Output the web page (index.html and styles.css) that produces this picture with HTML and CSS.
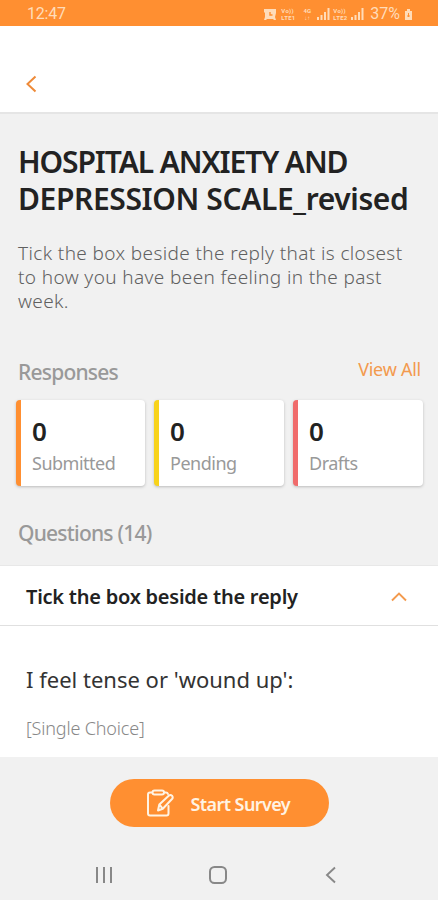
FILE: index.html
```html
<!DOCTYPE html>
<html lang="en">
<head>
<meta charset="utf-8">
<meta name="viewport" content="width=device-width">
<title>Survey details</title>
<link rel="stylesheet" href="styles.css">
</head>
<body>
<div class="screen">
  <div class="status">
    <span class="time">12:47</span>
    <div class="status-icons">
      <svg class="alarm" width="14" height="13" viewBox="0 0 14 13"><path d="M1 1h12v4l-1 4 1 3h-2l-1-1H4l-1 1H1l1-3V5L1 4z" fill="currentColor"/><path d="M7 4v3h2.500" fill="none" stroke="#ff8f31" stroke-width="1.400"/></svg>
      <span class="lte"><span>Vo))</span><span>LTE1</span></span>
      <span class="net"><span>4G</span><span>↓↑</span></span>
      <svg class="signal" width="13" height="12" viewBox="0 0 13 12"><path d="M1 12V9M4.500 12V7M8 12V4M11.500 12V0" stroke="currentColor" stroke-width="2"/></svg>
      <span class="lte"><span>Vo))</span><span>LTE2</span></span>
      <svg class="signal" width="13" height="12" viewBox="0 0 13 12"><path d="M1 12V9M4.500 12V7M8 12V4M11.500 12V0" stroke="currentColor" stroke-width="2"/></svg>
      <span class="percent">37%</span>
      <svg class="battery" width="9" height="13" viewBox="0 0 9 13"><path d="M3 1h3v2h2v9H1V3h2z" fill="currentColor"/><path d="M4.500 5v4M3 8h3" stroke="#ff8f31" fill="none"/></svg>
    </div>
  </div>
  <header class="appbar">
    <svg width="12" height="18" viewBox="0 0 12 18"><path d="M10.500 1.500 2.500 9l8 7.500" fill="none" stroke="#ee8a38" stroke-width="2"/></svg>
  </header>
  <main>
    <h1><span class="t1">HOSPITAL ANXIETY AND</span><br><span class="t2">DEPRESSION SCALE_revised</span></h1>
    <p class="intro">Tick the box beside the reply that is closest<br>to how you have been feeling in the past<br>week.</p>
    <div class="section-head"><h2>Responses</h2><a class="view-all">View All</a></div>
    <div class="cards">
      <div class="card submitted"><strong>0</strong><span>Submitted</span></div>
      <div class="card pending"><strong>0</strong><span>Pending</span></div>
      <div class="card drafts"><strong>0</strong><span>Drafts</span></div>
    </div>
    <h2 class="questions">Questions (14)</h2>
    <section class="panel">
      <div class="panel-head"><h3>Tick the box beside the reply</h3>
        <svg width="16" height="10" viewBox="0 0 16 10"><path d="m1 8.500 7-7 7 7" fill="none" stroke="#f39a4e" stroke-width="1.900"/></svg>
      </div>
      <div class="question"><p class="prompt">I feel tense or 'wound up':</p><p class="kind">[Single Choice]</p></div>
    </section>
  </main>
  <div class="action">
    <button class="start">
      <svg width="28" height="28" viewBox="0 0 28 28" fill="none" stroke="currentColor" stroke-width="2" stroke-linejoin="round" stroke-linecap="round"><path d="M6 3.500H4q-2 0-2 2v19q0 2 2 2h16.500q2 0 2-2V17M18 3.500h2q1.500 0 2 1.500"/><rect x="6.500" y="1.500" width="11.500" height="4" rx="2"/><path d="m12 21.500 1.300-6L22.700 6.700q1.800-1.400 3.300 0 1.400 1.700 0 3.300L16.800 19.700zM13.500 15.700l3 3.600"/></svg>
      <span>Start Survey</span>
    </button>
  </div>
  <nav class="navbar">
    <svg width="18" height="18" viewBox="0 0 18 18"><path d="M2 1v16M9 1v16M16 1v16" stroke="currentColor" stroke-width="2"/></svg>
    <svg width="18" height="18" viewBox="0 0 18 18"><rect x="1" y="1" width="16" height="16" rx="4.500" fill="none" stroke="currentColor" stroke-width="2"/></svg>
    <svg width="18" height="18" viewBox="0 0 18 18"><path d="M13 1.500 5 9l8 7.500" fill="none" stroke="currentColor" stroke-width="1.900"/></svg>
  </nav>
</div>
</body>
</html>
```
FILE: styles.css
```css
* { box-sizing: border-box; }
body { margin: 0; background: #f1f1f1; font-family: "Noto Sans", sans-serif; }
h1, h2, h3, p { margin: 0; white-space: nowrap; }
svg { display: block; flex: none; }
.screen { width: 438px; height: 900px; display: flex; flex-direction: column; overflow: hidden; }
.status { height: 26px; flex: none; background: #ff8f31; color: #ffdcb9; display: flex; justify-content: space-between; padding: 4px 25px 0 27px; font: 16px/20px Roboto, sans-serif; }
.status-icons { display: flex; align-items: center; height: 20px; }
.time { letter-spacing: -.2px; }
.lte, .net { display: flex; flex-direction: column; font-size: 6px; line-height: 7px; font-weight: 700; }
.lte { width: 16px; letter-spacing: .3px; }
.net { width: 12px; text-align: center; }
.alarm { margin-right: 4px; }
.alarm + .lte { margin-right: 4px; }
.net + .signal { margin: 0 3px 0 4px; }
.percent { margin: 0 4px 0 6px; }
.lte + .signal { margin-left: 2px; }
.appbar { height: 88px; flex: none; background: #fff; border-bottom: 2px solid #e5e5e5; padding: 49px 0 0 25px; }
main { flex: none; height: 643px; }
h1 { padding: 29px 18px 0; font-size: 30px; line-height: 37px; font-weight: 600; color: #222; }
.t1 { letter-spacing: -1.1px; }
.t2 { letter-spacing: -.38px; }
.intro { padding: 24px 18px 0; font-size: 19px; line-height: 24px; font-weight: 300; color: #606060; letter-spacing: .38px; }
.section-head { display: flex; justify-content: space-between; padding: 45px 17px 0 18px; }
h2 { font-size: 21px; line-height: 28px; font-weight: 500; color: #999; letter-spacing: -.78px; }
.view-all { margin-top: -1px; font-size: 18px; line-height: 24px; color: #f39a4e; letter-spacing: -.25px; }
.cards { display: grid; grid-template-columns: 129px 130px 130px; gap: 9px; padding: 14px 16px 0; }
.card { height: 86px; background: #fff; border-left: 5px solid; border-radius: 4px; box-shadow: 0 1px 3px #bbb; padding: 17px 0 0 11px; display: flex; flex-direction: column; }
.card strong { font-size: 26px; line-height: 28px; font-weight: 600; color: #222; }
.card span { font-size: 18px; line-height: 24px; margin-top: 6px; color: #999; letter-spacing: -.5px; }
.submitted { border-color: #ff8f31; }
.pending { border-color: #f8d31b; }
.drafts { border-color: #f06c6c; }
.questions { padding: 33px 18px 0; }
.panel { margin-top: 18px; background: #fff; height: 192px; border-top: 1px solid #e8e8e8; }
.panel-head { height: 60px; border-bottom: 1px solid #e0e0e0; display: flex; justify-content: space-between; align-items: center; padding: 2px 31px 0 26px; }
h3 { font-size: 20px; line-height: 28px; font-weight: 600; color: #222; letter-spacing: -.24px; }
.question { padding: 38px 26px 0; }
.prompt { font-size: 22px; line-height: 30px; color: #333; }
.kind { margin-top: 22px; font-size: 18px; line-height: 24px; color: #888; font-weight: 300; letter-spacing: -.17px; }
.action { height: 92px; display: flex; justify-content: center; padding-top: 22px; }
.start { width: 219px; height: 48px; border: 0; border-radius: 24px; background: #ff8f31; color: #fff3e3; display: flex; align-items: center; padding: 0 0 0 36px; gap: 17px; font: 600 18px/24px "Noto Sans", sans-serif; letter-spacing: -.58px; white-space: nowrap; }
.start span { margin-top: 2px; }
.navbar { height: 51px; display: flex; justify-content: space-between; padding: 17px 98px 0 95px; color: #888; }
```
